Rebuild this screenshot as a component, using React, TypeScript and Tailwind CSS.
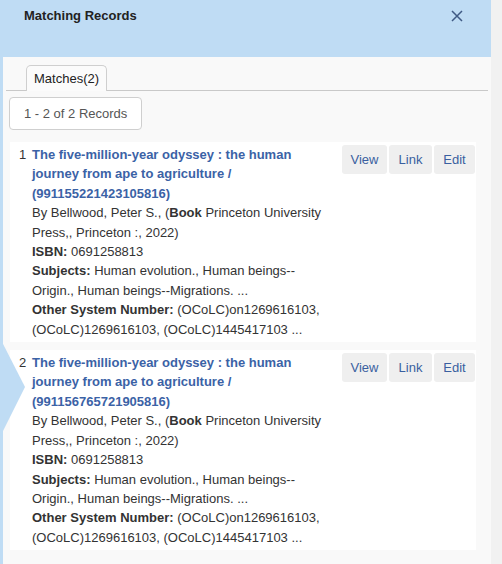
import React from "react";

type Rec = { n: number; id: string };

const recs: Rec[] = [
  { n: 1, id: "991155221423105816" },
  { n: 2, id: "991156765721905816" },
];

function Card({ r }: { r: Rec }) {
  return (
    <div className="flex bg-white pt-[3px] pb-[3px] pr-[1px] leading-[19.4px] text-[13px] text-[#333]">
      <div className="pl-[9px] w-[22px] shrink-0">{r.n}</div>
      <div className="w-[300px] shrink-0">
        <a className="font-bold text-[#3b62a6] block">
          The five-million-year odyssey : the human journey from ape to agriculture / ({r.id})
        </a>
        <div>
          By Bellwood, Peter S., (<b>Book</b> Princeton University Press,, Princeton :, 2022)
        </div>
        <div>
          <b>ISBN:</b> 0691258813
        </div>
        <div>
          <b>Subjects:</b> Human evolution., Human beings--Origin., Human beings--Migrations. ...
        </div>
        <div>
          <b>Other System Number:</b> (OCoLC)on1269616103, (OCoLC)1269616103, (OCoLC)1445417103 ...
        </div>
      </div>
      <div className="flex-1 flex justify-end items-start gap-[2px]">
        <button className="h-[29px] w-[45px] bg-[#efefef] rounded-[3px] text-[#3a5fa0] text-[13px]">View</button>
        <button className="h-[29px] w-[43px] bg-[#efefef] rounded-[3px] text-[#3a5fa0] text-[13px]">Link</button>
        <button className="h-[29px] w-[41px] bg-[#efefef] rounded-[3px] text-[#3a5fa0] text-[13px]">Edit</button>
      </div>
    </div>
  );
}

export default function App() {
  return (
    <div className="w-[502px] h-[564px] overflow-hidden bg-[#f1f1f1] flex font-['Liberation_Sans',Arial,sans-serif]">
      <div className="w-[491px] h-full flex flex-col bg-[#f9f9f9]">
        <div className="h-[57px] shrink-0 bg-[#bfdcf4] flex items-start justify-between pl-[24px] pr-[28px] pt-[8px]">
          <div className="text-[13px] font-bold text-[#222] leading-[16px]">Matching Records</div>
          <svg width="12" height="12" viewBox="0 0 12 12" className="mt-[2px]">
            <path d="M1 1 L11 11 M11 1 L1 11" stroke="#3f5a84" strokeWidth="1.5" fill="none" />
          </svg>
        </div>
        <div className="relative flex-1 border-l-[3px] border-[#bfdcf4] pl-[3px] pr-[3px] pt-[8px]">
          <div className="flex border-b border-[#c9c9c9] pl-[20px]">
            <div className="h-[26px] px-[7px] -mb-px bg-[#fbfbfb] border border-b-0 border-[#cfcfcf] rounded-t-[5px] flex items-center text-[13px] text-[#222]">
              Matches(2)
            </div>
          </div>
          <div className="pt-[6px] pl-[3px]">
            <div className="inline-flex items-center h-[33px] px-[14px] bg-white border border-[#cfcfcf] rounded-[4px] text-[13px] text-[#555]">
              1 - 2 of 2 Records
            </div>
          </div>
          <div className="pl-[4px] pr-[12px] pt-[12px] flex flex-col gap-[8px]">
            {recs.map((r) => (
              <Card key={r.n} r={r} />
            ))}
          </div>
          <svg
            className="absolute left-[-3px] top-[281px]"
            width="26"
            height="100"
            viewBox="0 0 26 100"
          >
            <polygon points="0,0 25,49 0,99" fill="#bfdcf4" />
          </svg>
        </div>
      </div>
    </div>
  );
}
